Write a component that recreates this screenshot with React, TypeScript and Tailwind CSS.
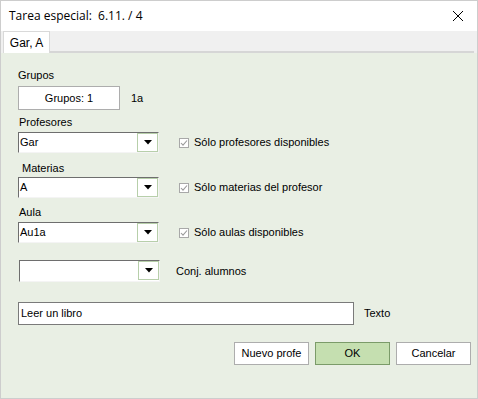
import React from "react";

const font = { fontFamily: '"Liberation Sans", Arial, sans-serif' };

function Combo({ value, className = "" }: { value: string; className?: string }) {
  return (
    <div
      className={`w-[141px] h-[21px] flex bg-white border border-t-[#6e6e6e] border-l-[#6e6e6e] border-b-[#f4f4f4] border-r-[#f4f4f4] ${className}`}
    >
      <div className="flex-1 text-[11px] leading-[19px] pl-[1px] text-black">{value}</div>
      <div className="w-[21px] h-[19px] border border-[#b7cfaa] bg-white flex items-center justify-center">
        <svg width="8" height="5" viewBox="0 0 8 5">
          <path d="M0 0h8L4 4.5z" fill="#000" />
        </svg>
      </div>
    </div>
  );
}

function Check({ label }: { label: string }) {
  return (
    <div className="flex items-center gap-[5px]">
      <div className="w-[10px] h-[10px] border border-[#a8a8a8] bg-white flex items-center justify-center">
        <svg width="8" height="8" viewBox="0 0 8 8">
          <path d="M1 4 3 6.2 7 1.5" stroke="#9a9a9a" strokeWidth="1.1" fill="none" />
        </svg>
      </div>
      <span className="text-[11px] text-black">{label}</span>
    </div>
  );
}

export default function App() {
  return (
    <div style={font} className="w-[478px] h-[399px] border border-[#cdcdcd] bg-white flex flex-col">
      <div className="h-[30px] flex items-center justify-between pl-[8px] pr-[13px]">
        <span className="text-[12px] text-black" style={{ fontFamily: '"Open Sans", Arial, sans-serif' }}>
          Tarea especial:&nbsp; 6.11. / 4
        </span>
        <svg width="12" height="12" viewBox="0 0 12 12">
          <path d="M1 1l10 10M11 1 1 11" stroke="#000" strokeWidth="1" />
        </svg>
      </div>
      <div className="h-[22px] bg-[#f0f0f0] flex items-end pl-[2px] pr-[3px]">
        <div className="h-[22px] w-[47px] bg-white border border-b-0 border-[#d9d9d9] text-[12px] text-black flex items-center justify-center">
          Gar, A
        </div>
        <div className="flex-1 h-[2px] bg-[#d6d6d6]" />
      </div>
      <div className="flex-1 bg-[#e9efe4] flex flex-col pl-[17px] pr-[6px]">
        <span className="mt-[15px] text-[11px] leading-[14px] text-black">Grupos</span>
        <div className="mt-[4px] flex items-center gap-[11px]">
          <div className="w-[102px] h-[24px] bg-white border border-[#adadad] text-[11px] text-black flex items-center justify-center">
            Grupos: 1
          </div>
          <span className="text-[11px] text-black">1a</span>
        </div>
        <span className="mt-[5px] ml-[1px] text-[11px] leading-[14px] text-black">Profesores</span>
        <div className="mt-[3px] flex items-center gap-[20px]">
          <Combo value="Gar" />
          <Check label="Sólo profesores disponibles" />
        </div>
        <span className="mt-[8px] ml-[4px] text-[11px] leading-[14px] text-black">Materias</span>
        <div className="mt-[2px] flex items-center gap-[20px]">
          <Combo value="A" />
          <Check label="Sólo materias del profesor" />
        </div>
        <span className="mt-[7px] ml-[1px] text-[11px] leading-[14px] text-black">Aula</span>
        <div className="mt-[3px] flex items-center gap-[20px]">
          <Combo value="Au1a" />
          <Check label="Sólo aulas disponibles" />
        </div>
        <div className="mt-[17px] flex items-center gap-[16px]">
          <Combo value="" className="ml-[1px] h-[22px]" />
          <span className="text-[11px] text-black">Conj. alumnos</span>
        </div>
        <div className="mt-[20px] flex items-center gap-[10px]">
          <div className="w-[336px] h-[23px] bg-white border border-[#7a7a7a] text-[11px] text-black pl-[2px] flex items-center">
            Leer un libro
          </div>
          <span className="text-[11px] text-black">Texto</span>
        </div>
        <div className="mt-[17px] flex justify-end gap-[6px]">
          <div className="w-[75px] h-[23px] bg-white border border-[#adadad] text-[11px] text-black flex items-center justify-center">
            Nuevo profe
          </div>
          <div className="w-[75px] h-[23px] bg-[#c5dfb0] border border-[#7b9b69] text-[11px] text-black flex items-center justify-center">
            OK
          </div>
          <div className="w-[75px] h-[23px] bg-white border border-[#adadad] text-[11px] text-black flex items-center justify-center">
            Cancelar
          </div>
        </div>
      </div>
    </div>
  );
}
